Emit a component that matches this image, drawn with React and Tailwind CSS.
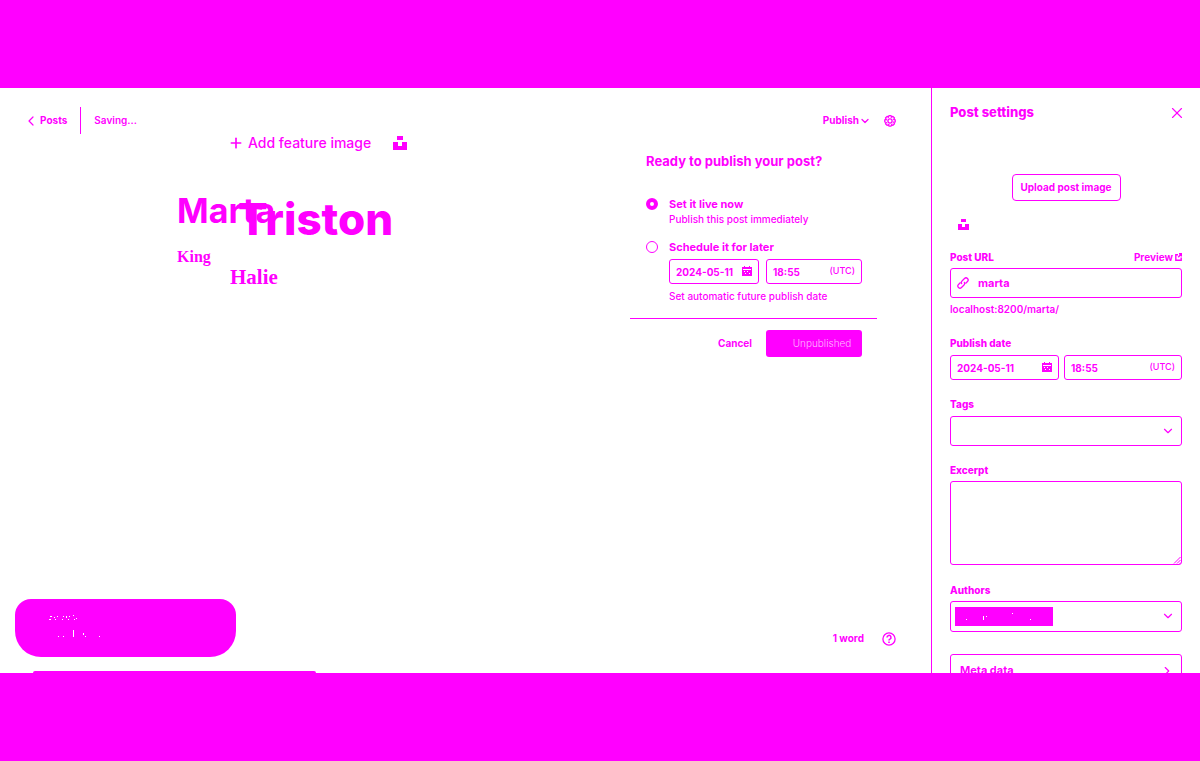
import React from "react";
import { ChevronLeft, ChevronDown, ChevronRight, X, Plus } from "lucide-react";

const label = "block text-[10px] leading-4 font-extrabold";
const choice = "block text-[11px] leading-4 font-bold";
const box = "w-full rounded-[3px] border border-[#ff00ff] bg-white text-[#ff00ff] outline-none";

function Unsplash({ className }) {
  return (
    <svg viewBox="0 0 14 14" className={className} fill="currentColor" shapeRendering="crispEdges" aria-hidden="true">
      <path d="M4 0h6v4H4zM0 6h5v4h4V6h5v8H0z" />
    </svg>
  );
}

function Calendar() {
  return (
    <svg viewBox="0 0 12 12" className="absolute top-1.5 right-1.5 size-3" fill="currentColor" shapeRendering="crispEdges" aria-hidden="true">
      <path fillRule="evenodd" d="M3 1h1v1h4V1h1v1h2v9H1V2h2zM2 4v1h8V4zM3 6v1h1V6zM6 6v1h1V6zM8 8v1h1V8zM4 8v1h1V8z" />
    </svg>
  );
}

function Gear() {
  return (
    <svg viewBox="0 0 14 14" className="size-3.5" fill="none" stroke="currentColor" aria-hidden="true">
      <path
        d="M5.9.8h2.2l.5 1.4 1.3-.7 1.6 1.6-.7 1.3 1.4.5v2.2l-1.4.5.7 1.3-1.6 1.6-1.3-.7-.5 1.4H5.9l-.5-1.4-1.3.7-1.6-1.6.7-1.3-1.4-.5V4.900l1.4-.5-.7-1.3 1.600-1.600 1.300.7z"
        transform="translate(0 .9)"
        strokeWidth="1.3"
        strokeLinejoin="round"
      />
      <circle cx="7" cy="7" r="2.1" strokeWidth="1.3" />
      <circle cx="7" cy="7" r="3.8" strokeWidth="0.7" strokeDasharray="1.5 1.5" />
    </svg>
  );
}

function Help() {
  return (
    <svg viewBox="0 0 14 14" className="size-3.5" fill="none" stroke="currentColor" strokeWidth="1.3" aria-hidden="true">
      <circle cx="7" cy="7" r="6.1" />
      <path d="M5 5.4a2 2 0 1 1 3 1.7q-1 .5-1 1.4M7 9.6V11" strokeWidth="1.5" />
    </svg>
  );
}

function Preview() {
  return (
    <svg viewBox="0 0 7 8" className="h-2 w-[7px]" fill="none" stroke="currentColor" strokeWidth="1.4" aria-hidden="true">
      <path d="M3 1.7H.8v5.5h5.4V4.5M4 .8h2.4v2.6M6.2 1 3.2 4.2" />
    </svg>
  );
}

function DateTime({ id, dateClass, timeClass }) {
  return (
    <div className={dateClass}>
      <div className="relative flex-1">
        <input id={id} aria-label="Date" defaultValue="2024-05-11" className={`${box} block h-[25px] px-1.5 text-[10px] font-bold`} />
        <Calendar />
      </div>
      <div className={timeClass}>
        <input aria-label="Time" defaultValue="18:55" className={`${box} block h-[25px] px-1.5 text-[10px] font-bold`} />
        <span className="absolute top-1.5 right-[7px] text-[9px] leading-3 font-medium">(UTC)</span>
      </div>
    </div>
  );
}

function Sidebar() {
  return (
    <aside className="flex w-[269px] shrink-0 flex-col overflow-hidden border-l border-[#ff00ff] px-[18px] pt-[15px]">
      <div className="flex h-5 shrink-0 items-center justify-between">
        <h2 className="text-[13px] font-extrabold">Post settings</h2>
        <button aria-label="Close"><X className="-mr-1 size-[18px]" strokeWidth={1.5} /></button>
      </div>
      <button className="mt-[51px] h-[27px] w-[109px] shrink-0 self-center rounded border border-[#ff00ff] text-[10px] font-bold">Upload post image</button>
      <button aria-label="Unsplash" className="mt-[18px] ml-2 w-3 shrink-0"><Unsplash className="size-[11px]" /></button>
      <div className="mt-[19px]">
        <div className="flex items-center justify-between">
          <label htmlFor="url" className={label}>Post URL</label>
          <a href="#preview" className="flex items-center gap-0.5 text-[10px] leading-4 font-bold">Preview <Preview /></a>
        </div>
        <div className="relative mt-[3px]">
          <input id="url" defaultValue="marta" className={`${box} block h-[30px] pl-[27px] text-[11px] font-bold`} />
          <svg viewBox="0 0 24 24" className="absolute top-[9px] left-[7px] size-3" fill="none" stroke="currentColor" strokeWidth="2.5" aria-hidden="true">
            <path d="M10 14a4 4 0 0 1 0-6l5-5a4 4 0 0 1 6 6l-4 4M14 10a4 4 0 0 1 0 6l-5 5a4 4 0 0 1-6-6l4-4" />
          </svg>
        </div>
        <p className="mt-[3px] text-[10px] leading-4 font-semibold">localhost:8200/marta/</p>
      </div>
      <div className="mt-[18px]">
        <label htmlFor="pdate" className={label}>Publish date</label>
        <DateTime id="pdate" dateClass="mt-1 flex gap-[5px]" timeClass="relative w-[118px]" />
      </div>
      <div className="mt-4">
        <label htmlFor="tags" className={label}>Tags</label>
        <div className="relative mt-1">
          <select id="tags" className={`${box} block h-[30px] appearance-none`}><option></option></select>
          <ChevronDown className="pointer-events-none absolute top-2 right-[7px] size-3.5" strokeWidth={2} />
        </div>
      </div>
      <div className="mt-4">
        <label htmlFor="excerpt" className={label}>Excerpt</label>
        <div className="relative mt-[3px]">
          <textarea id="excerpt" className={`${box} block h-[84px] resize-none`} />
          <svg viewBox="0 0 8 8" className="absolute right-px bottom-px size-2" fill="none" stroke="currentColor" aria-hidden="true"><path d="M1 7.5 7.5 1M4 7.5 7.5 4M6.5 8 8 6.5" /></svg>
        </div>
      </div>
      <div className="mt-[17px]">
        <label htmlFor="authors" className={label}>Authors</label>
        <div className="relative mt-[3px]">
          <select id="authors" className={`${box} block h-[31px] appearance-none`}><option></option></select>
          <div className="absolute top-1.5 left-[5px] h-[19px] w-[98px] bg-[#ff00ff]">
            <svg viewBox="0 0 98 19" fill="white" shapeRendering="crispEdges" aria-hidden="true"><path d="M11 12h1v1h-1zM28 9h1v4h-1zM31 9h1v1h-1zM57 6h1v1h-1zM75 12h1v1h-1z" /></svg>
          </div>
          <ChevronDown className="pointer-events-none absolute top-2 right-[7px] size-3.5" strokeWidth={2} />
        </div>
      </div>
      <button className="mt-[22px] flex h-[33px] shrink-0 items-center justify-between rounded-[3px] border border-[#ff00ff] pr-[7px] pl-[9px] text-[11px] font-bold">
        Meta data <ChevronRight className="size-3.5" strokeWidth={2} />
      </button>
    </aside>
  );
}

function PublishMenu() {
  return (
    <form className="absolute top-[56px] right-[54px] w-[247px] bg-white">
      <h3 className="px-4 pt-[7px] text-[13px] leading-5 font-bold">Ready to publish your post?</h3>
      <div className="px-4 pt-[25px]">
        <div className="flex gap-[11px]">
          <input id="now" type="radio" name="when" defaultChecked className="mt-0.5 size-3 shrink-0 appearance-none rounded-full border-4 border-[#ff00ff]" />
          <div>
            <label htmlFor="now" className={choice}>Set it live now</label>
            <p className="text-[10px] leading-[15px] font-medium">Publish this post immediately</p>
          </div>
        </div>
        <div className="mt-3 flex gap-[11px]">
          <input id="later" type="radio" name="when" className="mt-0.5 size-3 shrink-0 appearance-none rounded-full border border-[#ff00ff]" />
          <div>
            <label htmlFor="later" className={choice}>Schedule it for later</label>
            <DateTime id="sdate" dateClass="mt-1 flex w-[193px] gap-[7px]" timeClass="relative w-24" />
            <p className="mt-1 text-[10px] leading-4 font-medium">Set automatic future publish date</p>
          </div>
        </div>
      </div>
      <div className="mt-3.5 flex items-center justify-end gap-3.5 border-t border-[#ff00ff] px-[15px] pt-[11px]">
        <button type="button" className="text-[10px] font-bold">Cancel</button>
        <button type="button" className="h-[27px] w-24 rounded-[3px] bg-[#ff00ff] pl-4 text-[10px] font-light text-[#ffb8ff]">Unpublished</button>
      </div>
    </form>
  );
}

function Editor() {
  return (
    <main className="relative flex min-w-0 flex-1 flex-col">
      <header className="flex items-center justify-between pt-[19px] pr-[34px] pl-[23px]">
        <div className="flex items-center text-[10px] font-bold">
          <a href="#posts" className="flex items-center gap-px"><ChevronLeft className="size-4" strokeWidth={1.8} />Posts</a>
          <span className="mx-[13px] h-[27px] w-px bg-[#ff00ff]" />
          <span className="font-semibold">Saving...</span>
        </div>
        <div className="flex items-center gap-3">
          <button className="flex items-center text-[10px] font-bold">Publish<ChevronDown className="size-3" strokeWidth={2.5} /></button>
          <button aria-label="Settings"><Gear /></button>
        </div>
      </header>
      <div className="flex h-[17px] items-center pl-[228px]">
        <button className="flex items-center gap-1 text-[14px] leading-5 font-medium"><Plus className="size-4" strokeWidth={2.5} />Add feature image</button>
        <button aria-label="Unsplash" className="ml-[22px]"><Unsplash className="size-3.5" /></button>
      </div>
      <article className="relative mt-[38px] pl-[177px]">
        <h1 className="text-[34px] leading-[44px] font-bold">Marta</h1>
        <p className="mt-3 font-['Liberation_Serif',serif] text-[16px] leading-6 font-bold">King</p>
        <div className="absolute top-0 left-[230px]">
          <h1 className="pl-2 text-[44px] leading-[60px] font-extrabold">Triston</h1>
          <p className="mt-4 font-['Liberation_Serif',serif] text-[21px] leading-6 font-bold">Halie</p>
        </div>
      </article>
      <footer className="mt-auto flex items-center justify-end gap-[18px] pr-[35px] pb-[27px] text-[10px] font-bold">
        <span>1 word</span>
        <button aria-label="Help"><Help /></button>
      </footer>
      <PublishMenu />
      <div role="status" className="absolute bottom-4 left-[15px] h-[58px] w-[221px] rounded-t-[16px] rounded-b-[26px] bg-[#ff00ff]">
        <svg viewBox="0 0 221 58" fill="white" shapeRendering="crispEdges" aria-hidden="true">
          <path d="M35 17h2v1h-2zM34 20h2v1h-2zM39 18h1v1h-1zM40 20h1v1h-1zM42 17h1v1h-1zM47 20h1v1h-1zM48 17h1v1h-1zM51 17h1v2h-1zM53 20h1v1h-1zM54 17h1v1h-1zM58 16h1v1h-1zM59 20h1v1h-1zM61 19h1v1h-1zM43 37h1v1h-1zM48 37h1v1h-1zM58 31h1v7h-1zM68 34h1v2h-1zM70 37h1v1h-1zM84 37h1v1h-1z" />
        </svg>
      </div>
      <div className="absolute bottom-0 left-[33px] h-0.5 w-[283px] rounded-t-sm bg-[#ff00ff]" />
    </main>
  );
}

export default function App() {
  return (
    <div className="flex h-screen flex-col bg-white font-['Inter',sans-serif] text-[#ff00ff]">
      <div className="h-[88px] shrink-0 bg-[#ff00ff]" />
      <div className="flex min-h-0 flex-1 overflow-hidden">
        <Editor />
        <Sidebar />
      </div>
      <div className="h-[88px] shrink-0 bg-[#ff00ff]" />
    </div>
  );
}
